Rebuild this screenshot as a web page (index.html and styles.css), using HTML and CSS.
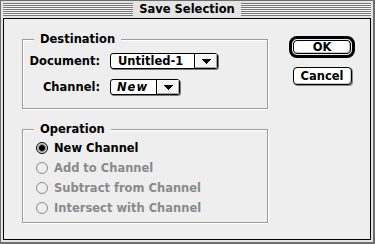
FILE: index.html
```html
<!DOCTYPE html>
<html>
<head>
<meta charset="utf-8">
<link rel="stylesheet" href="styles.css">
</head>
<body>
<div class="window">
  <div class="titlebar">
    <div class="stripes"></div>
    <div class="title">Save Selection</div>
    <div class="stripes"></div>
  </div>
  <div class="content">
    <div class="groups">
      <div class="group dest">
        <span class="legend">Destination</span>
        <div class="row">
          <span class="lbl">Document:</span>
          <div class="popup pop-doc">
            <span class="ptext">Untitled-1</span>
            <span class="parrow"><svg width="9" height="5" viewBox="0 0 9 5"><path d="M0 0h9v1h-1v1h-1v1h-1v1h-1v1h-1v-1h-1v-1h-1v-1h-1v-1h-1z" fill="#000"/></svg></span>
          </div>
        </div>
        <div class="row">
          <span class="lbl">Channel:</span>
          <div class="popup pop-new">
            <span class="ptext new">New</span>
            <span class="parrow"><svg width="9" height="5" viewBox="0 0 9 5"><path d="M0 0h9v1h-1v1h-1v1h-1v1h-1v1h-1v-1h-1v-1h-1v-1h-1v-1h-1z" fill="#000"/></svg></span>
          </div>
        </div>
      </div>
      <div class="group op">
        <span class="legend">Operation</span>
        <div class="radio on"><span class="rb"></span>New Channel</div>
        <div class="radio"><span class="rb"></span>Add to Channel</div>
        <div class="radio"><span class="rb"></span>Subtract from Channel</div>
        <div class="radio"><span class="rb"></span>Intersect with Channel</div>
      </div>
    </div>
    <div class="buttons">
      <div class="ring"><div class="btn">OK</div></div>
      <div class="btn cancel">Cancel</div>
    </div>
  </div>
</div>
</body>
</html>
```
FILE: styles.css
```css
html, body {
  margin: 0;
  padding: 0;
}
body {
  width: 375px;
  height: 244px;
  overflow: hidden;
  font-family: "DejaVu Sans", "Liberation Sans", sans-serif;
  font-weight: bold;
  font-size: 11.5px;
  color: #000;
}
.window {
  box-sizing: border-box;
  width: 375px;
  height: 244px;
  background: #e4e4e4;
  border: 1px solid #6e6e6e;
  border-right-width: 2px;
  border-bottom-width: 2px;
  padding: 0 2px 2px 2px;
  display: flex;
  flex-direction: column;
}
.titlebar {
  height: 17px;
  flex: none;
  display: flex;
  align-items: center;
}
.stripes {
  flex: 1;
  height: 13px;
  background: repeating-linear-gradient(to bottom, #777 0 1px, #f6f6f6 1px 2px);
}
.title {
  padding: 0 6px;
  line-height: 17px;
}
.content {
  flex: 1;
  box-sizing: border-box;
  background: #eeeeee;
  border: 1px solid #000;
  display: flex;
  align-items: flex-start;
  padding-left: 18px;
}
.groups {
  width: 246px;
  margin-top: 20px;
  display: flex;
  flex-direction: column;
  gap: 20px;
}
.group {
  position: relative;
  box-sizing: border-box;
  border: 1px solid #9c9c9c;
  box-shadow: inset 1px 1px #fff, 1px 1px #fff;
}
.legend {
  position: absolute;
  left: 11px;
  top: -8px;
  padding: 0 6px;
  background: #eeeeee;
  line-height: 14px;
}
.dest {
  height: 70px;
  padding-top: 13px;
  display: flex;
  flex-direction: column;
  gap: 10px;
}
.row {
  display: flex;
  align-items: center;
  height: 16px;
}
.lbl {
  width: 77px;
  text-align: right;
  margin-right: 10px;
  line-height: 14px;
}
.popup {
  box-sizing: border-box;
  display: flex;
  height: 16px;
  border: 1px solid #000;
  border-radius: 3px;
  background: #fff;
  box-shadow: 1px 1px #7a7a7a;
  overflow: hidden;
}
.pop-doc { width: 108px; }
.pop-new { width: 70px; }
.ptext {
  flex: 1;
  padding-left: 7px;
  line-height: 14px;
  white-space: nowrap;
}
.ptext.new {
  font-style: italic;
  padding-left: 6px;
  letter-spacing: 1px;
}
.parrow {
  width: 22px;
  flex: none;
  border-left: 1px solid #000;
  display: flex;
  align-items: center;
  justify-content: center;
  box-shadow: inset -1px -1px #a8a8a8, inset 1px 1px #fff;
  background: #f4f4f4;
}
.parrow svg { display: block; }
.op {
  height: 94px;
  padding: 8px 0 0 13px;
}
.radio {
  display: flex;
  align-items: center;
  gap: 6px;
  height: 20px;
  color: #8a8a8a;
  white-space: nowrap;
}
.radio.on { color: #000; }
.rb {
  box-sizing: border-box;
  width: 12px;
  height: 12px;
  border-radius: 50%;
  border: 1px solid #8a8a8a;
  background: #eeeeee;
  flex: none;
}
.radio.on .rb {
  border-color: #000;
  background: radial-gradient(circle, #000 0 2.6px, #9a9a9a 3.2px 4px, #d8d8d8 4.2px 100%);
}
.buttons {
  width: 66px;
  margin-left: 21px;
  margin-top: 17px;
  display: flex;
  flex-direction: column;
  align-items: center;
  gap: 9px;
}
.ring {
  box-sizing: border-box;
  width: 66px;
  height: 22px;
  border: 3px solid #000;
  border-radius: 8px;
  padding: 1px;
  background: #eeeeee;
  display: flex;
}
.ring .btn {
  flex: 1;
  border-radius: 4px;
}
.btn {
  box-sizing: border-box;
  border: 1px solid #000;
  border-radius: 4px;
  background: #fff;
  display: flex;
  align-items: center;
  justify-content: center;
  line-height: 14px;
  box-shadow: inset -1px -1px #c4c4c4;
}
.cancel {
  width: 59px;
  height: 18px;
  box-shadow: inset -1px -1px #c4c4c4, 1px 1px #8a8a8a;
}
```
